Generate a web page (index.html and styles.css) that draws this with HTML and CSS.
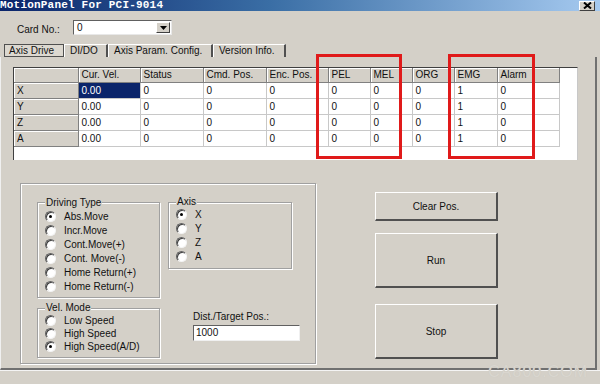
FILE: index.html
```html
<!DOCTYPE html>
<html lang="en">
<head>
    <meta charset="UTF-8">
    <title>MotionPanel For PCI-9014</title>
    <link rel="stylesheet" href="styles.css">
</head>
<body>
    <div class="window">
        <!-- title bar -->
        <div class="titlebar">
            <span class="title">MotionPanel For PCI-9014</span>
            <span class="close">
                <svg width="11" height="7" viewBox="0 0 11 7"><path d="M2 0.5 L9 6.5 M9 0.5 L2 6.5" stroke="#000" stroke-width="2"/></svg>
            </span>
        </div>

        <div class="card-row">
            <span class="card-label">Card No.:</span>
            <div class="combo">
                <span class="combo-text">0</span>
                <span class="combo-btn">
                    <svg width="7" height="4" viewBox="0 0 7 4"><path d="M0 0 H7 L3.5 4 Z" fill="#000"/></svg>
                </span>
            </div>
        </div>

        <div class="tabs">
            <span class="tab active">Axis Drive</span>
            <span class="tab w-dio">DI/DO</span>
            <span class="tab w-param">Axis Param. Config.</span>
            <span class="tab w-ver">Version Info.</span>
        </div>

        <div class="panel">
            <div class="grid">
                <table>
                    <colgroup>
                        <col class="c64"><col class="c62"><col class="c63"><col class="c63"><col class="c62">
                        <col class="c42"><col class="c42"><col class="c42"><col class="c43"><col class="c62">
                    </colgroup>
                    <tr>
                        <th></th><th>Cur. Vel.</th><th>Status</th><th>Cmd. Pos.</th><th>Enc. Pos.</th>
                        <th>PEL</th><th>MEL</th><th>ORG</th><th>EMG</th><th>Alarm</th>
                    </tr>
                    <tr>
                        <th>X</th><td class="sel">0.00</td><td>0</td><td>0</td><td>0</td>
                        <td>0</td><td>0</td><td>0</td><td>1</td><td>0</td>
                    </tr>
                    <tr>
                        <th>Y</th><td>0.00</td><td>0</td><td>0</td><td>0</td>
                        <td>0</td><td>0</td><td>0</td><td>1</td><td>0</td>
                    </tr>
                    <tr>
                        <th>Z</th><td>0.00</td><td>0</td><td>0</td><td>0</td>
                        <td>0</td><td>0</td><td>0</td><td>1</td><td>0</td>
                    </tr>
                    <tr>
                        <th>A</th><td>0.00</td><td>0</td><td>0</td><td>0</td>
                        <td>0</td><td>0</td><td>0</td><td>1</td><td>0</td>
                    </tr>
                </table>
                <!-- red highlight marks -->
                <div class="mark mark-lim"></div>
                <div class="mark mark-emg"></div>
            </div>

            <div class="lower">
                <div class="frame">
                    <div class="col-left">
                        <div class="group g-drive">
                            <span class="legend">Driving Type</span>
                            <label class="radio"><span class="dot on"></span>Abs.Move</label>
                            <label class="radio"><span class="dot"></span>Incr.Move</label>
                            <label class="radio"><span class="dot"></span>Cont.Move(+)</label>
                            <label class="radio"><span class="dot"></span>Cont. Move(-)</label>
                            <label class="radio"><span class="dot"></span>Home Return(+)</label>
                            <label class="radio"><span class="dot"></span>Home Return(-)</label>
                        </div>
                        <div class="group g-vel">
                            <span class="legend">Vel. Mode</span>
                            <label class="radio"><span class="dot"></span>Low Speed</label>
                            <label class="radio"><span class="dot"></span>High Speed</label>
                            <label class="radio"><span class="dot on"></span>High Speed(A/D)</label>
                        </div>
                    </div>
                    <div class="col-right">
                        <div class="group g-axis">
                            <span class="legend">Axis</span>
                            <label class="radio"><span class="dot on"></span>X</label>
                            <label class="radio"><span class="dot"></span>Y</label>
                            <label class="radio"><span class="dot"></span>Z</label>
                            <label class="radio"><span class="dot"></span>A</label>
                        </div>
                        <div class="dist">
                            <span class="dist-label">Dist./Target Pos.:</span>
                            <div class="edit">1000</div>
                        </div>
                    </div>
                </div>

                <div class="buttons">
                    <div class="btn btn-clear">Clear Pos.</div>
                    <div class="btn btn-big">Run</div>
                    <div class="btn btn-big btn-stop">Stop</div>
                </div>
            </div>
        </div>

        <div class="status"></div>
        <span class="watermark">CA800.COM</span>
    </div>
</body>
</html>
```

FILE: styles.css
```css
*{
    margin: 0;
    padding: 0;
    box-sizing: border-box;
}
body{
    width: 600px;
    height: 384px;
    overflow: hidden;
    background-color: #d4d0c8;
    font-family: "Liberation Sans", Arial, sans-serif;
    font-size: 10px;
    color: #111;
}
.window{
    position: relative;
    display: flex;
    flex-direction: column;
    height: 384px;
}

/* title bar */
.titlebar{
    height: 11px;
    display: flex;
    align-items: center;
    justify-content: space-between;
    padding-right: 5px;
    background-image: linear-gradient(to right, #0a246a 0%, #3a6ea5 45%, #a6caf0 100%);
}
.title{
    font-family: "Liberation Mono", monospace;
    font-weight: bold;
    font-size: 11px;
    letter-spacing: 0.2px;
    color: #fff;
    line-height: 11px;
}
.close{
    width: 16px;
    height: 10px;
    display: flex;
    align-items: center;
    justify-content: center;
    background-color: #d4d0c8;
    border-top: 1px solid #fff;
    border-left: 1px solid #fff;
    border-right: 1px solid #404040;
    border-bottom: 1px solid #404040;
}

/* card selector */
.card-row{
    height: 33px;
    display: flex;
    align-items: center;
    padding-left: 17px;
}
.card-label{
    width: 56px;
    margin-top: 4px;
}
.combo{
    width: 99px;
    height: 15px;
    display: flex;
    justify-content: space-between;
    align-items: center;
    background-color: #fff;
    border-top: 1px solid #606060;
    border-left: 1px solid #606060;
    border-right: 1px solid #e8e8e8;
    border-bottom: 1px solid #e8e8e8;
    padding: 1px 1px 1px 3px;
}
.combo-btn{
    width: 14px;
    height: 11px;
    display: flex;
    align-items: center;
    justify-content: center;
    background-color: #d4d0c8;
    border-top: 1px solid #fff;
    border-left: 1px solid #fff;
    border-right: 1px solid #404040;
    border-bottom: 1px solid #404040;
}

/* tabs */
.tabs{
    height: 13px;
    display: flex;
    padding-left: 4px;
}
.tab{
    height: 13px;
    line-height: 12px;
    padding-left: 5px;
    border-left: 1px solid #fff;
    border-top: 1px solid #fff;
    border-right: 2px solid #505050;
}
.tab.active{
    width: 60px;
    padding-left: 4px;
    border: 1px solid #505050;
    background-color: #dcd8d0;
}
.w-dio{ width: 44px; }
.w-param{ width: 105px; }
.w-ver{ width: 73px; }

/* tab page */
.panel{
    height: 313px;
    margin-right: 3px;
    padding: 10px 0 0 12px;
    border-left: 1px solid #f0f0f0;
    border-right: 2px solid #707070;
    border-bottom: 2px solid #707070;
}

/* data grid */
.grid{
    position: relative;
    width: 565px;
    height: 93px;
    background-color: #fff;
    border-left: 1px solid #404040;
    border-top: 1px solid #404040;
    border-right: 1px solid #c8c8c8;
}
table{
    table-layout: fixed;
    width: 545px;
    border-collapse: collapse;
}
.c64{ width: 64px; }
.c62{ width: 62px; }
.c63{ width: 63px; }
.c42{ width: 42px; }
.c43{ width: 43px; }
th, td{
    height: 16px;
    padding-left: 3px;
    text-align: left;
    font-weight: normal;
    white-space: nowrap;
    overflow: hidden;
}
tr:first-child th{
    height: 14px;
}
th{
    background-color: #d4d0c8;
    border-right: 1px solid #808080;
    border-bottom: 1px solid #808080;
    box-shadow: inset 1px 1px 0 #fff;
}
td{
    border-right: 1px solid #c8c8c8;
    border-bottom: 1px solid #c8c8c8;
}
td.sel{
    background-color: #0a246a;
    color: #fff;
}
.mark{
    position: absolute;
    top: -14px;
    height: 105px;
    border: 3px solid #e01a1a;
}
.mark-lim{
    left: 302px;
    width: 86px;
}
.mark-emg{
    left: 434px;
    width: 87px;
}

/* lower area */
.lower{
    display: flex;
    margin-top: 23px;
}
.frame{
    width: 296px;
    height: 181px;
    margin-left: 7px;
    display: flex;
    padding: 18px 0 0 16px;
    border: 1px solid #a0a0a0;
    box-shadow: inset 1px 1px 0 #fff, 1px 1px 0 #fff;
}
.col-left{
    width: 123px;
    display: flex;
    flex-direction: column;
    gap: 10px;
}
.col-right{
    margin-left: 8px;
    display: flex;
    flex-direction: column;
}
.group{
    display: flex;
    flex-direction: column;
    border: 1px solid #a0a0a0;
    box-shadow: inset 1px 1px 0 #fff, 1px 1px 0 #fff;
}
.legend{
    align-self: flex-start;
    margin: -7px 0 0 7px;
    padding: 0 1px;
    line-height: 12px;
    background-color: #d4d0c8;
}
.radio{
    display: flex;
    align-items: center;
    height: 14px;
    padding-left: 7px;
}
.dot{
    position: relative;
    width: 11px;
    height: 11px;
    margin-right: 8px;
    border-radius: 50%;
    background-color: #fff;
    border-top: 1px solid #606060;
    border-left: 1px solid #606060;
    border-right: 1px solid #f4f4f4;
    border-bottom: 1px solid #f4f4f4;
    box-shadow: inset 1px 1px 0 #404040;
}
.dot.on::after{
    content: "";
    position: absolute;
    left: 3px;
    top: 3px;
    width: 3px;
    height: 3px;
    border-radius: 50%;
    background-color: #000;
}
.g-drive{
    height: 96px;
    padding-top: 1px;
}
.g-vel{
    height: 50px;
}
.g-vel .radio{
    height: 13px;
}
.g-axis{
    width: 124px;
    height: 67px;
}
.g-axis .radio{
    height: 14px;
}
.g-axis .radio:nth-child(2){
    margin-top: -1px;
}
.dist{
    margin: 42px 0 0 25px;
    display: flex;
    flex-direction: column;
    gap: 3px;
}
.edit{
    width: 107px;
    height: 16px;
    line-height: 14px;
    padding-left: 2px;
    background-color: #fff;
    border-top: 1px solid #606060;
    border-left: 1px solid #606060;
    border-right: 1px solid #f0f0f0;
    border-bottom: 1px solid #f0f0f0;
}

/* buttons */
.buttons{
    width: 123px;
    margin-left: 59px;
    padding-top: 9px;
    display: flex;
    flex-direction: column;
}
.btn{
    display: flex;
    align-items: center;
    justify-content: center;
    border-top: 1px solid #fff;
    border-left: 1px solid #fff;
    border-right: 2px solid #505050;
    border-bottom: 2px solid #505050;
}
.btn-clear{
    height: 29px;
}
.btn-big{
    height: 55px;
    margin-top: 12px;
}
.btn-stop{
    margin-top: 16px;
}

.status{
    flex: 1;
    border-top: 1px solid #f4f4f4;
}
.watermark{
    position: absolute;
    right: 12px;
    bottom: 3px;
    font-size: 16px;
    letter-spacing: 1px;
    color: #d9d6cf;
    text-shadow: 0 0 1px #cbc7bf;
}
```
